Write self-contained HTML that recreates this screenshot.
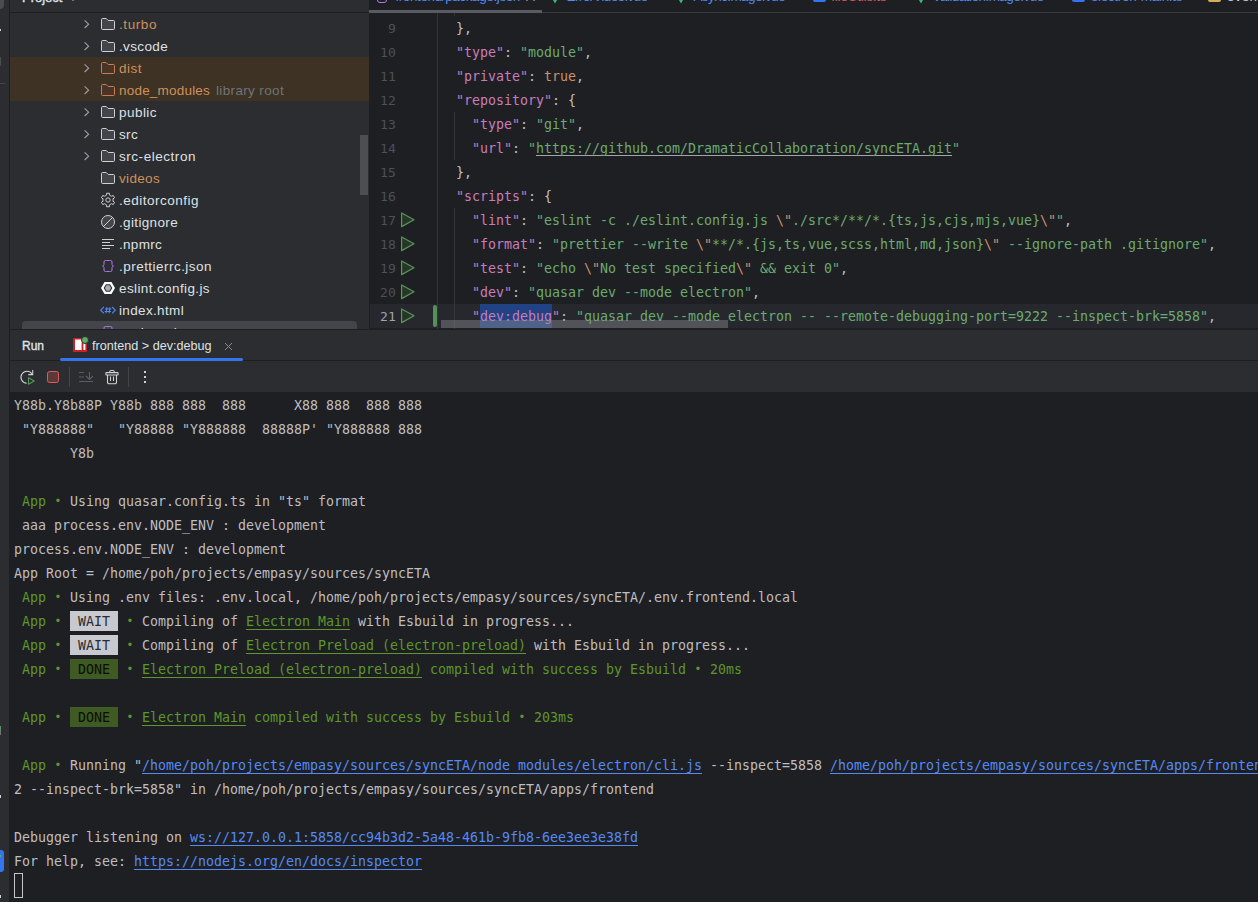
<!DOCTYPE html>
<html lang="en">
<head>
<meta charset="utf-8">
<title>frontend – package.json</title>
<style>
*{box-sizing:border-box;margin:0;padding:0}
html,body{width:1258px;height:902px;overflow:hidden;background:#1e1f22}
body{position:relative;font-family:"Liberation Sans",sans-serif;font-size:13px;color:#dfe1e5}
.abs{position:absolute}
/* left stripe */
#stripe{left:0;top:0;width:10px;height:902px;background:#2b2d30}
#stripe .vline{left:9px;top:0;width:1px;height:902px;background:#1e1f22}
/* project panel */
#proj{left:10px;top:0;width:359px;height:329px;background:#2b2d30;overflow:hidden}
#proj .hdr{left:0;top:0;width:359px;height:12px}
#proj .hline{left:0;top:12px;width:359px;height:1px;background:#1e1f22}
.row{position:absolute;left:0;width:359px;height:22px;line-height:22px;white-space:nowrap}
.row.ex{background:#3d3223}
.row .chev{position:absolute;left:74px;top:5px;width:8px;height:12px}
.row .ico{position:absolute;left:90px;top:3px;width:16px;height:16px}
.row{font-size:13.5px}
.hdrtxt{left:12px;top:-12px;font-size:13px;font-weight:400;-webkit-text-stroke:.4px #dfe1e5;line-height:20px}
.rt{font-size:13px;white-space:nowrap;transform-origin:0 0}
.ln.cur{color:#a1a3ab}
.tabs{left:0;top:0;width:889px;height:13px;overflow:hidden}
.tb{top:-13px;height:20px;line-height:20px;font-family:"Liberation Sans",sans-serif;font-size:13.5px;white-space:nowrap}
.row .nm{position:absolute;left:109px;top:1px;display:inline-block;transform-origin:0 50%}
.ign{color:#d0905c}
.lib{color:#6f737a}
/* editor */
#ed{left:369px;top:0;width:889px;height:329px;background:#1e1f22;overflow:hidden}
.mono{font-family:"DejaVu Sans Mono","Liberation Mono",monospace;font-size:13.288px;letter-spacing:.0133px}
.ln{position:absolute;left:0;width:27px;text-align:right;height:24px;line-height:24px;color:#4b5059;font-size:13.1px;letter-spacing:.1132px}
.cl{position:absolute;left:71px;height:24px;line-height:24px;white-space:pre;color:#bcbec4}
.k{color:#c77dbb}.s{color:#6aab73}.o{color:#cf8e6d}
.u{text-decoration:underline;text-underline-offset:2px;text-decoration-thickness:1px;text-decoration-color:#a3a5ab;text-decoration-skip-ink:none}
.run{position:absolute;left:31px;width:16px;height:16px}
/* run panel */
#runp{left:10px;top:329px;width:1248px;height:63px;background:#2b2d30}
#con{left:10px;top:392px;width:1248px;height:510px;background:#1e1f22;overflow:hidden}
.c{position:absolute;left:4px;height:24px;line-height:24px;white-space:pre;color:#bcbec4}
.g{color:#5c962c}
.l{color:#548af7;text-decoration:underline;text-underline-offset:3px;text-decoration-thickness:1px;text-decoration-skip-ink:none}
.gu{text-decoration:underline;text-underline-offset:3px;text-decoration-thickness:1px;text-decoration-skip-ink:none}
.b{display:inline-block;width:8px;text-align:center;font-size:11.5px;letter-spacing:0;position:relative;top:-.6px}
.bw{background:#c8c9cf;color:#2b2d30;display:inline-block;height:20px;line-height:22px;vertical-align:top;margin-top:1px}
.bd{background:#3f5a22;color:#0a0f05;display:inline-block;height:20px;line-height:22px;vertical-align:top;margin-top:1px}
</style>
</head>
<body>
<div id="stripe" class="abs"><div class="abs vline"></div>
<div class="abs" style="left:0;top:0;width:4px;height:9px;border-radius:0 0 4px 0;background:#4a4c50"></div>
<div class="abs" style="left:0;top:29px;width:1px;height:2px;background:#ced0d6"></div>
<div class="abs" style="left:0;top:57px;width:1px;height:9px;background:#4a4c50"></div>
<div class="abs" style="left:0;top:83px;width:5px;height:1px;background:#43454a"></div>
<div class="abs" style="left:0;top:726px;width:1px;height:4px;background:#57965c"></div>
<div class="abs" style="left:0;top:730px;width:1px;height:5px;background:#6f737a"></div>
<div class="abs" style="left:0;top:795px;width:1px;height:3px;background:#ced0d6"></div>
<div class="abs" style="left:0;top:850px;width:4px;height:22px;border-radius:0 3px 3px 0;background:#3574f0"></div>
<div class="abs" style="left:0;top:855px;width:1px;height:2px;background:#5fad65"></div>
<div class="abs" style="left:0;top:895px;width:1px;height:3px;background:#ced0d6"></div>

</div>
<div id="proj" class="abs">
  <div class="abs hdrtxt">Project</div>
  <div class="abs" style="left:62px;top:0;width:2px;height:1px;background:#6f737a"></div>
  <div class="abs hline"></div>
<div class="row " style="top:13px"><svg class="chev" viewBox="0 0 8 12"><path d="M0.6 2.4L4.6 6.2L0.6 10" fill="none" stroke="#9da0a8" stroke-width="1.1"/></svg><svg class="ico" viewBox="0 0 16 16"><path d="M1.5 3.5a1 1 0 0 1 1-1h3.7l2 2h5.3a1 1 0 0 1 1 1v7a1 1 0 0 1-1 1h-11a1 1 0 0 1-1-1z" fill="#43454a" stroke="#ced0d6" stroke-width="1"/></svg><span class="nm ign" style="letter-spacing:0.578px">.turbo</span></div>
<div class="row " style="top:35px"><svg class="chev" viewBox="0 0 8 12"><path d="M0.6 2.4L4.6 6.2L0.6 10" fill="none" stroke="#9da0a8" stroke-width="1.1"/></svg><svg class="ico" viewBox="0 0 16 16"><path d="M1.5 3.5a1 1 0 0 1 1-1h3.7l2 2h5.3a1 1 0 0 1 1 1v7a1 1 0 0 1-1 1h-11a1 1 0 0 1-1-1z" fill="#43454a" stroke="#ced0d6" stroke-width="1"/></svg><span class="nm " style="letter-spacing:0.353px">.vscode</span></div>
<div class="row ex" style="top:57px"><svg class="chev" viewBox="0 0 8 12"><path d="M0.6 2.4L4.6 6.2L0.6 10" fill="none" stroke="#9da0a8" stroke-width="1.1"/></svg><svg class="ico" viewBox="0 0 16 16"><path d="M1.5 3.5a1 1 0 0 1 1-1h3.7l2 2h5.3a1 1 0 0 1 1 1v7a1 1 0 0 1-1 1h-11a1 1 0 0 1-1-1z" fill="#4a3428" stroke="#c77d55" stroke-width="1"/></svg><span class="nm ign" style="letter-spacing:0.496px">dist</span></div>
<div class="row ex" style="top:79px"><svg class="chev" viewBox="0 0 8 12"><path d="M0.6 2.4L4.6 6.2L0.6 10" fill="none" stroke="#9da0a8" stroke-width="1.1"/></svg><svg class="ico" viewBox="0 0 16 16"><path d="M1.5 3.5a1 1 0 0 1 1-1h3.7l2 2h5.3a1 1 0 0 1 1 1v7a1 1 0 0 1-1 1h-11a1 1 0 0 1-1-1z" fill="#4a3428" stroke="#c77d55" stroke-width="1"/></svg><span class="nm ign" style="letter-spacing:0.202px">node_modules</span><span class="nm lib" style="left:206px;letter-spacing:0.352px">library root</span></div>
<div class="row " style="top:101px"><svg class="chev" viewBox="0 0 8 12"><path d="M0.6 2.4L4.6 6.2L0.6 10" fill="none" stroke="#9da0a8" stroke-width="1.1"/></svg><svg class="ico" viewBox="0 0 16 16"><path d="M1.5 3.5a1 1 0 0 1 1-1h3.7l2 2h5.3a1 1 0 0 1 1 1v7a1 1 0 0 1-1 1h-11a1 1 0 0 1-1-1z" fill="#43454a" stroke="#ced0d6" stroke-width="1"/></svg><span class="nm " style="letter-spacing:0.453px">public</span></div>
<div class="row " style="top:123px"><svg class="chev" viewBox="0 0 8 12"><path d="M0.6 2.4L4.6 6.2L0.6 10" fill="none" stroke="#9da0a8" stroke-width="1.1"/></svg><svg class="ico" viewBox="0 0 16 16"><path d="M1.5 3.5a1 1 0 0 1 1-1h3.7l2 2h5.3a1 1 0 0 1 1 1v7a1 1 0 0 1-1 1h-11a1 1 0 0 1-1-1z" fill="#43454a" stroke="#ced0d6" stroke-width="1"/></svg><span class="nm " style="letter-spacing:0.333px">src</span></div>
<div class="row " style="top:145px"><svg class="chev" viewBox="0 0 8 12"><path d="M0.6 2.4L4.6 6.2L0.6 10" fill="none" stroke="#9da0a8" stroke-width="1.1"/></svg><svg class="ico" viewBox="0 0 16 16"><path d="M1.5 3.5a1 1 0 0 1 1-1h3.7l2 2h5.3a1 1 0 0 1 1 1v7a1 1 0 0 1-1 1h-11a1 1 0 0 1-1-1z" fill="#43454a" stroke="#ced0d6" stroke-width="1"/></svg><span class="nm " style="letter-spacing:0.539px">src-electron</span></div>
<div class="row " style="top:167px"><svg class="ico" viewBox="0 0 16 16"><path d="M1.5 3.5a1 1 0 0 1 1-1h3.7l2 2h5.3a1 1 0 0 1 1 1v7a1 1 0 0 1-1 1h-11a1 1 0 0 1-1-1z" fill="#43454a" stroke="#ced0d6" stroke-width="1"/></svg><span class="nm ign" style="letter-spacing:0.328px">videos</span></div>
<div class="row " style="top:189px"><svg class="ico" viewBox="0 0 16 16"><path d="M9.49 3.12L9.32 1.23L6.68 1.23L6.51 3.12L4.52 4.27L2.79 3.47L1.48 5.75L3.03 6.85L3.03 9.15L1.48 10.25L2.79 12.53L4.52 11.73L6.51 12.88L6.68 14.77L9.32 14.77L9.49 12.88L11.48 11.73L13.21 12.53L14.52 10.25L12.97 9.15L12.97 6.85L14.52 5.75L13.21 3.47L11.48 4.27z" fill="none" stroke="#ced0d6" stroke-width="1" stroke-linejoin="round"/><circle cx="8" cy="8" r="2.2" fill="none" stroke="#ced0d6" stroke-width="1"/></svg><span class="nm " style="letter-spacing:0.496px">.editorconfig</span></div>
<div class="row " style="top:211px"><svg class="ico" viewBox="0 0 16 16"><circle cx="8" cy="8" r="6.5" fill="#43454a" stroke="#ced0d6" stroke-width="1"/><path d="M3.4 12.6L12.6 3.4" stroke="#ced0d6" stroke-width="1"/></svg><span class="nm " style="letter-spacing:0.345px">.gitignore</span></div>
<div class="row " style="top:233px"><svg class="ico" viewBox="0 0 16 16"><path d="M2 3.5h12M2 6.5h8M2 9.500h12M2 12.500h8" stroke="#ced0d6" stroke-width="1"/></svg><span class="nm " style="letter-spacing:0.289px">.npmrc</span></div>
<div class="row " style="top:255px"><svg class="ico" viewBox="0 0 16 16"><path d="M6.500 2.500H5.500a1.500 1.500 0 0 0-1.500 1.500v2.300c0 .8-.6 1.500-1.500 1.700c.9.200 1.500.9 1.500 1.700v2.300a1.500 1.500 0 0 0 1.500 1.500h1M9.500 2.500h1a1.500 1.500 0 0 1 1.500 1.500v2.300c0 .8.600 1.500 1.500 1.700c-.9.200-1.500.9-1.500 1.700v2.300a1.500 1.500 0 0 1-1.500 1.500h-1M6.500 2.500h3M6.500 13.500h3" fill="none" stroke="#b07ce8" stroke-width="1"/></svg><span class="nm " style="letter-spacing:0.467px">.prettierrc.json</span></div>
<div class="row " style="top:277px"><svg class="ico" viewBox="0 0 16 16"><path d="M1 8L4.500 2h7L15 8l-3.500 6h-7z" fill="#ffffff"/><path d="M3.700 8l2.150-3.700h4.300L12.300 8l-2.150 3.700h-4.300z" fill="#2b2d30"/><path d="M4.900 8l1.550-2.650h3.100L11.100 8l-1.550 2.650h-3.100z" fill="#a8abb3"/></svg><span class="nm " style="letter-spacing:0.388px">eslint.config.js</span></div>
<div class="row " style="top:299px"><svg class="ico" viewBox="0 0 16 16" style="overflow:visible"><path d="M3.800 5L0.700 8.200l3.100 3.200M12.200 5l3.100 3.200-3.100 3.200" fill="none" stroke="#548af7" stroke-width="1.100"/><path d="M6.900 5.100L6.100 11.300M9.900 5.100L9.100 11.300M5 7h6.300M4.700 9.500h6.300" fill="none" stroke="#548af7" stroke-width="1"/></svg><span class="nm " style="letter-spacing:0.347px">index.html</span></div>
<div class="abs" style="left:12px;top:321px;width:335px;height:22px;border-radius:4px;background:#43454a"></div>
<div class="row" style="top:321px"><svg class="ico" viewBox="0 0 16 16"><path d="M6.500 2.500H5.500a1.500 1.500 0 0 0-1.500 1.500v2.300c0 .8-.6 1.500-1.500 1.700c.9.200 1.500.9 1.500 1.700v2.300a1.500 1.500 0 0 0 1.500 1.500h1M9.500 2.500h1a1.500 1.500 0 0 1 1.500 1.500v2.300c0 .8.600 1.500 1.500 1.700c-.9.200-1.500.9-1.500 1.700v2.300a1.500 1.500 0 0 1-1.500 1.500h-1M6.500 2.500h3M6.500 13.500h3" fill="none" stroke="#b07ce8" stroke-width="1"/></svg><span class="nm">package.json</span></div>
  <div class="abs" style="left:350px;top:135px;width:8px;height:60px;background:#4d4e51"></div>
</div>
<div id="ed" class="abs mono">
<div class="abs tabs"><div class="abs tb" style="left:26.4px;color:#548af7;letter-spacing:-0.393px">frontend/package.json</div>
<div class="abs" style="left:8.4px;top:-9px;width:10px;height:12px;border:1px solid #b07ce8;border-radius:3px"></div>
<div class="abs tb" style="left:197.6px;color:#548af7;letter-spacing:-0.644px">ErrorVideo.vue</div>
<svg class="abs" style="left:177.6px;top:-11px" width="16" height="16" viewBox="0 0 16 16"><path d="M1 2.500h3.200L8 9.200l3.800-6.700H15L8 14.500z" fill="#3fb27f"/></svg>
<div class="abs tb" style="left:324.4px;color:#548af7;letter-spacing:-0.587px">AsyncImage.vue</div>
<svg class="abs" style="left:304.4px;top:-11px" width="16" height="16" viewBox="0 0 16 16"><path d="M1 2.500h3.200L8 9.200l3.800-6.700H15L8 14.500z" fill="#3fb27f"/></svg>
<div class="abs tb" style="left:462.3px;color:#e0575b;letter-spacing:-0.230px">fileUtils.ts</div>
<div class="abs" style="left:443.8px;top:-11px;width:13px;height:13px;border-radius:2px;background:#3574f0"></div>
<div class="abs tb" style="left:563.6px;color:#548af7;letter-spacing:-0.544px">ValidationImage.vue</div>
<svg class="abs" style="left:543.6px;top:-11px" width="16" height="16" viewBox="0 0 16 16"><path d="M1 2.500h3.200L8 9.200l3.800-6.700H15L8 14.500z" fill="#3fb27f"/></svg>
<div class="abs tb" style="left:721.7px;color:#548af7;letter-spacing:-0.278px">electron-main.ts</div>
<div class="abs" style="left:703.2px;top:-11px;width:13px;height:13px;border-radius:2px;background:#3574f0"></div>
<div class="abs tb" style="left:857.8px;color:#ced0d6;letter-spacing:0.324px">events.js</div>
<div class="abs" style="left:839.3px;top:-11px;width:13px;height:13px;border-radius:2px;border:1.500px solid #d6ae58;border-bottom-width:3px"></div>
<div class="abs" style="left:157px;top:0;width:1.500px;height:1px;background:#6f737a"></div><div class="abs" style="left:164px;top:0;width:1.500px;height:1px;background:#6f737a"></div>
<div class="abs" style="left:173px;top:12px;width:716px;height:1px;background:#393b40"></div>
<div class="abs" style="left:0;top:10px;width:173px;height:3px;background:#585b61"></div></div>
<div class="abs" style="left:1px;top:304px;width:888px;height:24px;background:#26282e"></div>
<div class="abs" style="left:111px;top:304px;width:72px;height:24px;background:#214283"></div>
<div class="abs" style="left:68px;top:13px;width:1px;height:316px;background:#313438"></div>
<div class="abs" style="left:85px;top:13px;width:1px;height:3px;background:#313438"></div>
<div class="abs" style="left:85px;top:112px;width:1px;height:48px;background:#313438"></div>
<div class="abs" style="left:85px;top:208px;width:1px;height:121px;background:#313438"></div>
<div class="abs" style="left:64px;top:305px;width:4px;height:22px;border-radius:2px;background:#549159"></div>
<div class="ln" style="top:17px">9</div>
<div class="cl" style="top:17px">  },</div>
<div class="ln" style="top:41px">10</div>
<div class="cl" style="top:41px">  <span class="k">&quot;type&quot;</span>: <span class="s">&quot;module&quot;</span>,</div>
<div class="ln" style="top:65px">11</div>
<div class="cl" style="top:65px">  <span class="k">&quot;private&quot;</span>: <span class="o">true</span>,</div>
<div class="ln" style="top:89px">12</div>
<div class="cl" style="top:89px">  <span class="k">&quot;repository&quot;</span>: {</div>
<div class="ln" style="top:113px">13</div>
<div class="cl" style="top:113px">    <span class="k">&quot;type&quot;</span>: <span class="s">&quot;git&quot;</span>,</div>
<div class="ln" style="top:137px">14</div>
<div class="cl" style="top:137px">    <span class="k">&quot;url&quot;</span>: <span class="s">&quot;<span class="u">https://github.com/DramaticCollaboration/syncETA.git</span>&quot;</span></div>
<div class="ln" style="top:161px">15</div>
<div class="cl" style="top:161px">  },</div>
<div class="ln" style="top:185px">16</div>
<div class="cl" style="top:185px">  <span class="k">&quot;scripts&quot;</span>: {</div>
<div class="ln" style="top:209px">17</div>
<svg class="run" style="top:212px" viewBox="0 0 16 16"><path d="M1.600 1v13.600L14 7.800z" fill="#253627" stroke="#57965c" stroke-width="1.200" stroke-linejoin="round"/></svg>
<div class="cl" style="top:209px">    <span class="k">&quot;lint&quot;</span>: <span class="s">&quot;eslint -c ./eslint.config.js <span class="o">\&quot;</span>./src*/**/*.{ts,js,cjs,mjs,vue}<span class="o">\&quot;</span>&quot;</span>,</div>
<div class="ln" style="top:233px">18</div>
<svg class="run" style="top:236px" viewBox="0 0 16 16"><path d="M1.600 1v13.600L14 7.800z" fill="#253627" stroke="#57965c" stroke-width="1.200" stroke-linejoin="round"/></svg>
<div class="cl" style="top:233px">    <span class="k">&quot;format&quot;</span>: <span class="s">&quot;prettier --write <span class="o">\&quot;</span>**/*.{js,ts,vue,scss,html,md,json}<span class="o">\&quot;</span> --ignore-path .gitignore&quot;</span>,</div>
<div class="ln" style="top:257px">19</div>
<svg class="run" style="top:260px" viewBox="0 0 16 16"><path d="M1.600 1v13.600L14 7.800z" fill="#253627" stroke="#57965c" stroke-width="1.200" stroke-linejoin="round"/></svg>
<div class="cl" style="top:257px">    <span class="k">&quot;test&quot;</span>: <span class="s">&quot;echo <span class="o">\&quot;</span>No test specified<span class="o">\&quot;</span> &amp;&amp; exit 0&quot;</span>,</div>
<div class="ln" style="top:281px">20</div>
<svg class="run" style="top:284px" viewBox="0 0 16 16"><path d="M1.600 1v13.600L14 7.800z" fill="#253627" stroke="#57965c" stroke-width="1.200" stroke-linejoin="round"/></svg>
<div class="cl" style="top:281px">    <span class="k">&quot;dev&quot;</span>: <span class="s">&quot;quasar dev --mode electron&quot;</span>,</div>
<div class="ln cur" style="top:305px">21</div>
<svg class="run" style="top:308px" viewBox="0 0 16 16"><path d="M1.600 1v13.600L14 7.800z" fill="#253627" stroke="#57965c" stroke-width="1.200" stroke-linejoin="round"/></svg>
<div class="cl" style="top:305px">    <span class="k">&quot;dev:debug&quot;</span>: <span class="s">&quot;quasar dev --mode electron -- --remote-debugging-port=9222 --inspect-brk=5858&quot;</span>,</div>
<div class="abs" style="left:72px;top:320px;width:287px;height:8px;background:rgba(140,142,148,.42)"></div>
</div>
<div id="runp" class="abs">
<div class="abs" style="left:0;top:0;width:1248px;height:1px;background:#1e1f22"></div>
<div class="abs" style="left:0;top:31px;width:1248px;height:1px;background:#1e1f22"></div>
<div class="abs rt" style="left:12px;top:7px;height:20px;line-height:20px;-webkit-text-stroke:.4px #dfe1e5;transform:scaleX(.925)">Run</div>
<svg class="abs" style="left:63px;top:9px" width="14" height="14" viewBox="0 0 14 14"><rect width="14" height="14" fill="#cb1f26"/><rect x="2" y="1.500" width="10.400" height="10.500" fill="#fff"/><rect x="8.600" y="4.400" width="1.800" height="7.600" fill="#cb1f26"/></svg>
<div class="abs" style="left:71px;top:7px;width:8px;height:8px;border-radius:50%;background:#5fad65;border:1px solid #2b2d30"></div>
<div class="abs rt" style="left:82px;top:7px;height:20px;line-height:20px;transform:scaleX(.97)">frontend &gt; dev:debug</div>
<svg class="abs" style="left:214px;top:13px" width="9" height="9" viewBox="0 0 9 9"><path d="M1 1l7 7M8 1l-7 7" stroke="#868a91" stroke-width="1"/></svg>
<div class="abs" style="left:50px;top:29px;width:183px;height:3px;border-radius:1.5px;background:#3574f0"></div>
<svg class="abs" style="left:9px;top:40px" width="18" height="18" viewBox="0 0 18 18"><path d="M7.700 14.200A6 6 0 1 1 13.300 5.400" fill="none" stroke="#ced0d6" stroke-width="1.100"/><path d="M9.300 5.600H13.700V1" fill="none" stroke="#ced0d6" stroke-width="1.100"/><path d="M9.500 8.700v6.600l5.700-3.300z" fill="#1f3324" stroke="#57965c" stroke-width="1.100" stroke-linejoin="round"/></svg>
<div class="abs" style="left:37px;top:42px;width:12px;height:12px;border-radius:2.500px;background:#5e3838;border:1px solid #db5c5c"></div>
<div class="abs" style="left:59px;top:38px;width:1px;height:20px;background:#43454a"></div>
<svg class="abs" style="left:67px;top:40px" width="18" height="16" viewBox="0 0 18 16"><path d="M2 3.500h5M2 8h5M2 12.500h14M12.500 3v7.500M9 7l3.500 3.500L16 7" fill="none" stroke="#5a5d63" stroke-width="1.100"/></svg>
<svg class="abs" style="left:94px;top:40px" width="16" height="16" viewBox="0 0 16 16"><path d="M2.500 3.600h11a.6.6 0 0 1 .6.600v1.200a.6.6 0 0 1-.6.600h-11a.6.6 0 0 1-.6-.600V4.200a.6.6 0 0 1 .6-.600zM5.700 3.500V3a1.500 1.500 0 0 1 1.500-1.500h1.600A1.500 1.500 0 0 1 10.300 3v.5M3.500 6.200v7a1.500 1.500 0 0 0 1.500 1.500h6a1.500 1.500 0 0 0 1.500-1.500v-7M6.500 7.500v4.500M9.500 7.500v4.500" fill="none" stroke="#ced0d6" stroke-width="1.100"/></svg>
<div class="abs" style="left:118px;top:38px;width:1px;height:20px;background:#43454a"></div>
<div class="abs" style="left:134px;top:42px;width:2px;height:2px;background:#ced0d6"></div>
<div class="abs" style="left:134px;top:47px;width:2px;height:2px;background:#ced0d6"></div>
<div class="abs" style="left:134px;top:52px;width:2px;height:2px;background:#ced0d6"></div>
</div>
<div id="con" class="abs mono">
<div class="c" style="top:2px">Y88b.Y8b88P Y88b 888 888  888      X88 888  888 888</div>
<div class="c" style="top:26px"> &quot;Y888888&quot;   &quot;Y88888 &quot;Y888888  88888P' &quot;Y888888 888</div>
<div class="c" style="top:50px">       Y8b</div>
<div class="c" style="top:98px"> <span class="g">App <span class="b">•</span></span> Using quasar.config.ts in &quot;ts&quot; format</div>
<div class="c" style="top:122px"> aaa process.env.NODE_ENV : development</div>
<div class="c" style="top:146px">process.env.NODE_ENV : development</div>
<div class="c" style="top:170px">App Root = /home/poh/projects/empasy/sources/syncETA</div>
<div class="c" style="top:194px"> <span class="g">App <span class="b">•</span></span> Using .env files: .env.local, /home/poh/projects/empasy/sources/syncETA/.env.frontend.local</div>
<div class="c" style="top:218px"> <span class="g">App <span class="b">•</span></span> <span class="bw"> WAIT </span> <span class="g"><span class="b">•</span></span> Compiling of <span class="g"><span class="gu">Electron Main</span></span> with Esbuild in progress...</div>
<div class="c" style="top:242px"> <span class="g">App <span class="b">•</span></span> <span class="bw"> WAIT </span> <span class="g"><span class="b">•</span></span> Compiling of <span class="g"><span class="gu">Electron Preload (electron-preload)</span></span> with Esbuild in progress...</div>
<div class="c" style="top:266px"> <span class="g">App <span class="b">•</span></span> <span class="bd"> DONE </span> <span class="g"><span class="b">•</span> <span class="gu">Electron Preload (electron-preload)</span> compiled with success by Esbuild <span class="b">•</span> 20ms</span></div>
<div class="c" style="top:314px"> <span class="g">App <span class="b">•</span></span> <span class="bd"> DONE </span> <span class="g"><span class="b">•</span> <span class="gu">Electron Main</span> compiled with success by Esbuild <span class="b">•</span> 203ms</span></div>
<div class="c" style="top:362px"> <span class="g">App <span class="b">•</span></span> Running &quot;<span class="l">/home/poh/projects/empasy/sources/syncETA/node_modules/electron/cli.js</span> --inspect=5858 <span class="l">/home/poh/projects/empasy/sources/syncETA/apps/frontend</span> -- --remote-debugging-port=922</div>
<div class="c" style="top:386px">2 --inspect-brk=5858&quot; in /home/poh/projects/empasy/sources/syncETA/apps/frontend</div>
<div class="c" style="top:434px">Debugger listening on <span class="l">ws://127.0.0.1:5858/cc94b3d2-5a48-461b-9fb8-6ee3ee3e38fd</span></div>
<div class="c" style="top:458px">For help, see: <span class="l">https://nodejs.org/en/docs/inspector</span></div>
<div class="abs" style="left:4px;top:481px;width:9px;height:25px;border:1px solid #c4c6cc"></div>
</div>
</body>
</html>
